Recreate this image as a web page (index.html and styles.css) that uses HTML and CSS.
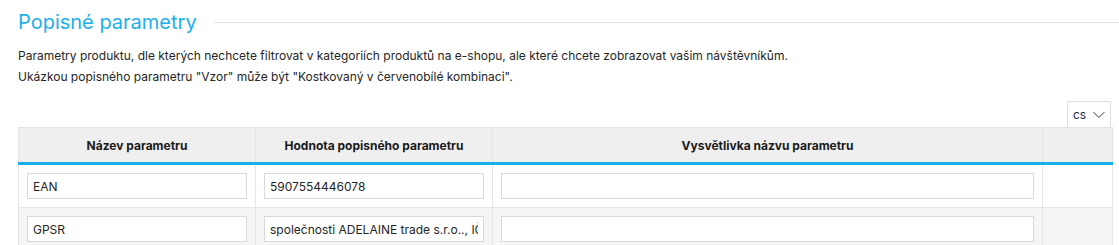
FILE: index.html
```html
<!DOCTYPE html>
<html lang="cs">
<head>
    <meta charset="UTF-8">
    <meta name="viewport" content="width=device-width, initial-scale=1.0">
    <title>Popisné parametry</title>
    <link rel="stylesheet" href="styles.css">
</head>
<body>
    <div class="section">
        <!-- Section heading with the rule line -->
        <div class="section-head">
            <h2 class="section-title">Popisné parametry</h2>
            <span class="section-line"></span>
        </div>

        <p class="intro">
            Parametry produktu, dle kterých nechcete filtrovat v kategoriích produktů na e-shopu, ale které chcete zobrazovat vašim návštěvníkům.<br>
            Ukázkou popisného parametru "Vzor" může být "Kostkovaný v červenobílé kombinaci".
        </p>

        <div class="toolbar">
            <div class="lang-select">
                <span>cs</span>
                <svg width="13" height="8" viewBox="0 0 13 8"><path d="M0.5 0.8 L6.5 6.8 L12.5 0.8" fill="none" stroke="#333" stroke-width="1.1"/></svg>
            </div>
        </div>

        <table class="param-table">
            <colgroup>
                <col class="col-name">
                <col class="col-value">
                <col class="col-note">
                <col class="col-actions">
            </colgroup>
            <thead>
                <tr>
                    <th>Název parametru</th>
                    <th>Hodnota popisného parametru</th>
                    <th>Vysvětlivka názvu parametru</th>
                    <th></th>
                </tr>
            </thead>
            <tbody>
                <tr>
                    <td><input class="field" type="text" value="EAN"></td>
                    <td><input class="field" type="text" value="5907554446078"></td>
                    <td><input class="field" type="text" value=""></td>
                    <td></td>
                </tr>
                <tr class="row-alt">
                    <td><input class="field" type="text" value="GPSR"></td>
                    <td><input class="field" type="text" value="společnosti ADELAINE trade s.r.o.., IČO: 08213852"></td>
                    <td><input class="field" type="text" value=""></td>
                    <td></td>
                </tr>
            </tbody>
        </table>
    </div>
</body>
</html>
```

FILE: styles.css
```css
/* Base page */
body, html {
    margin: 0;
    padding: 0;
    background-color: #ffffff;
    font-family: Inter, "Noto Sans", sans-serif;
    color: #262626;
    overflow: hidden;
}

.section {
    padding: 9px 8px 0 18px;
}

/* Heading with line on the right */
.section-head {
    display: flex;
    align-items: center;
}

.section-title {
    margin: 0;
    font-size: 20px;
    line-height: 26px;
    font-weight: 400;
    color: #1cb0ea;
}

.section-line {
    flex: 1;
    height: 1px;
    margin: 0 -8px 0 17px;
    background-color: #e4e4e4;
}

.intro {
    margin: 10px 0 14px;
    font-size: 12px;
    line-height: 21px;
}

/* Language switch */
.toolbar {
    display: flex;
    justify-content: flex-end;
}

.lang-select {
    display: flex;
    align-items: center;
    gap: 7px;
    box-sizing: border-box;
    width: 44px;
    height: 26px;
    padding: 0 5px;
    border: 1px solid #dddddd;
    border-bottom: 0;
    font-size: 12px;
    color: #1e2a44;
}

/* Parameter table */
.param-table {
    width: 1094px;
    border-collapse: collapse;
    table-layout: fixed;
}

.col-name { width: 237px; }
.col-value { width: 237px; }
.col-note { width: 550px; }
.col-actions { width: 70px; }

.param-table th {
    height: 34px;
    padding: 0 8px;
    background-color: #efefef;
    border: 1px solid #e4e4e4;
    border-bottom: 3px solid #17b0ec;
    font-size: 12px;
    font-weight: 700;
    color: #1a1a1a;
    text-align: center;
}

.param-table td {
    padding: 8px;
    border: 1px solid #e6e6e6;
}

.row-alt td {
    background-color: #f5f5f5;
}

.field {
    display: block;
    box-sizing: border-box;
    width: 100%;
    height: 26px;
    margin: 0;
    padding: 0 5px;
    border: 1px solid #d9d9d9;
    background-color: #ffffff;
    font-family: Inter, "Noto Sans", sans-serif;
    font-size: 12px;
    color: #262626;
    outline: none;
}
```
